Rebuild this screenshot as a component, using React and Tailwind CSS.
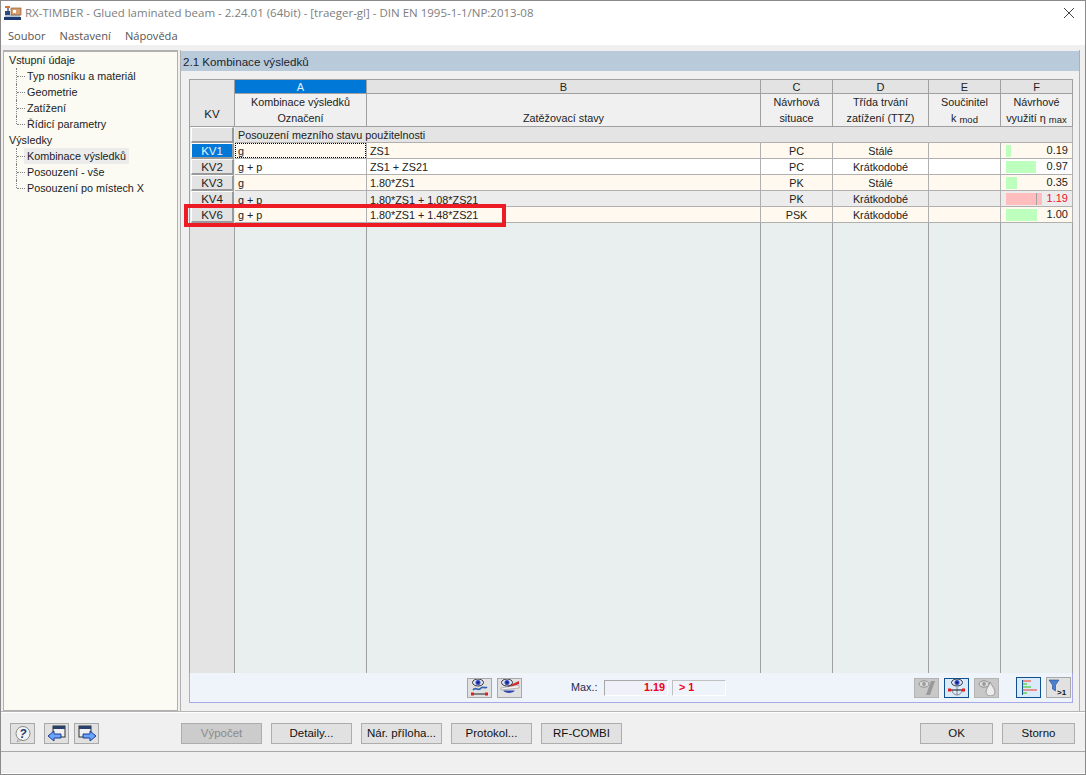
import React from "react";

const cols = "grid grid-cols-[45px_132px_394px_72px_96px_72px_72px]";

function TreeItem({ children, active, last }) {
  return (
    <div className="relative h-4 pl-[15px] flex items-center">
      <span className={`absolute left-[7px] top-0 w-0 border-l border-dotted border-[#808080] ${last ? "h-2" : "h-4"}`} />
      <span className="absolute left-[8px] top-2 w-[8px] border-t border-dotted border-[#808080]" />
      <span className={`px-[3px] h-4 leading-4 ${active ? "bg-[#ececec]" : ""}`}>{children}</span>
    </div>
  );
}

function ColLetter({ children, active }) {
  return (
    <div className={`h-[14px] leading-[14px] text-center text-[11px] border-r border-b border-[#a0a0a0] ${active ? "bg-[#0078d7] text-[#dff0ff]" : "bg-[#e3e3e3] text-[#222]"}`}>
      {children}
    </div>
  );
}

function Head({ a, b }) {
  return (
    <div className="h-[33px] bg-[#f0f0f0] border-r border-b border-[#a0a0a0] flex flex-col items-center text-[#222] leading-4">
      <div className="h-4 leading-4">{a}</div>
      <div className="h-4 leading-4">{b}</div>
    </div>
  );
}

function Bar({ w, red, value }) {
  return (
    <div className="relative h-4 border-r border-b border-[#b0b0b0] flex items-center justify-end pr-[4px]">
      <span className={`absolute left-[5px] top-[2px] h-[12px] ${red ? "bg-[#ffbdbd]" : "bg-[#bdffbd]"}`} style={{ width: w }} />
      {red && <span className="absolute left-[35px] top-[2px] h-[12px] w-px bg-[#a0a0a0]" />}
      <span className={`relative leading-[17px] text-[11px] ${red ? "text-[#f01030]" : "text-[#222]"}`}>{value}</span>
    </div>
  );
}

function Row({ kv, a, b, c, d, w, value, bg, red, selected, clip }) {
  const cell = `h-4 border-r border-b border-[#b0b0b0] leading-[17px] ${bg}`;
  return (
    <div className={cols}>
      <div className={`h-4 mx-px border-t border-l border-white border-b-2 border-r-2 border-b-[#9a9a9a] border-r-[#9a9a9a] leading-[15px] text-center text-[11.5px] ${selected ? "bg-[#0078d7] text-[#e6f3ff]" : "bg-[#e3e3e3] text-[#222]"}`}>{kv}</div>
      <div className={`${cell} pl-[3px] relative overflow-hidden`}>
        <span className={clip ? "relative top-[1px]" : ""}>{a}</span>
        {selected && <span className="absolute inset-0 border border-dotted border-black" />}
      </div>
      <div className={`${cell} pl-[3px] overflow-hidden`}><span className={clip ? "relative top-[1px]" : ""}>{b}</span></div>
      <div className={`${cell} text-center`}>{c}</div>
      <div className={`${cell} text-center`}>{d}</div>
      <div className={cell} />
      <div className={bg}><Bar w={w} red={red} value={value} /></div>
    </div>
  );
}

function IconBtn({ children, active, disabled, size = "w-[25px] h-[21px]" }) {
  return (
    <div className={`${size} flex items-center justify-center border ${active ? "border-[#10508c] bg-[#d9ebfb]" : disabled ? "border-[#b4b4b4] bg-[#c8c8c8]" : "border-[#a8a8a8] bg-[#e1e1e1]"}`}>
      {children}
    </div>
  );
}

function Eye({ x = 4, y = 2, c = "#2f48c8" }) {
  return (
    <g>
      <ellipse cx={x + 5} cy={y + 3.5} rx="5.5" ry="3.5" fill="#dfe4f4" stroke="#222" strokeWidth="0.9" />
      <circle cx={x + 5} cy={y + 3.5} r="2.5" fill={c} />
      <circle cx={x + 5} cy={y + 3.5} r="0.9" fill="#0a1040" />
    </g>
  );
}

function GrayEye() {
  return (
    <g>
      <ellipse cx="7" cy="5" rx="5" ry="3.2" fill="#dcdcdc" stroke="#8a8a8a" strokeWidth="0.9" />
      <circle cx="7" cy="5" r="1.9" fill="#9a9a9a" />
    </g>
  );
}

function Btn({ children, disabled, w }) {
  return (
    <div className={`h-[21px] flex items-center justify-center border border-[#adadad] text-[11.5px] ${w} ${disabled ? "bg-[#cccccc] text-[#8a8a8a]" : "bg-[#e1e1e1] text-[#111]"}`}>
      {children}
    </div>
  );
}

export default function App() {
  return (
    <div className="w-[1086px] h-[775px] bg-[#f0f0f0] flex flex-col overflow-hidden relative text-[#222] border border-[#8a8a8a]" style={{ fontFamily: '"Liberation Sans", Arial, sans-serif', fontSize: 10.8 }}>
      {/* title bar */}
      <div className="h-[24px] bg-white flex items-center pl-[3px] shrink-0">
        <svg width="18" height="16" viewBox="0 0 18 16" className="mr-[3px]">
          <rect x="0" y="12" width="17" height="3" fill="#1d3c6e" />
          <rect x="1" y="10" width="15" height="2" fill="#b8c4d8" />
          <rect x="1" y="1" width="5" height="2" fill="#d87838" />
          <rect x="3" y="3" width="2" height="3" fill="#7a8aa8" />
          <rect x="1" y="6" width="5" height="4" fill="#2a4a80" />
          <rect x="7" y="3" width="10" height="7" fill="#d8a070" stroke="#7a4a20" strokeWidth="0.6" />
          <rect x="9" y="5" width="3" height="3" fill="#fff" />
        </svg>
        <span className="text-[#7e7e7e]" style={{ fontFamily: '"Open Sans", sans-serif', fontSize: 11.5 }}>RX-TIMBER - Glued laminated beam - 2.24.01 (64bit) - [traeger-gl] - DIN EN 1995-1-1/NP:2013-08</span>
        <svg width="12" height="12" viewBox="0 0 12 12" className="ml-auto mr-[10px]"><path d="M1 1 L11 11 M11 1 L1 11" stroke="#444" strokeWidth="1" /></svg>
      </div>
      {/* menu */}
      <div className="h-[20px] bg-white flex items-center pl-[7px] pt-[3px] gap-[14px] text-[#555] shrink-0" style={{ fontFamily: '"Open Sans", sans-serif', fontSize: 11.1 }}>
        <span>Soubor</span><span>Nastavení</span><span>Nápověda</span>
      </div>
      {/* body */}
      <div className="h-[667px] flex pt-[5px] pl-[2px] pr-[5px] gap-[2px] shrink-0 border-b border-[#b5b5b5]">
        {/* tree */}
        <div className="w-[175px] shrink-0 bg-[#fbfbf3] border border-t-2 border-[#b0b0b0] pl-[5px] leading-4">
          <div className="h-4 leading-4">Vstupní údaje</div>
          <TreeItem>Typ nosníku a materiál</TreeItem>
          <TreeItem>Geometrie</TreeItem>
          <TreeItem>Zatížení</TreeItem>
          <TreeItem last>Řídicí parametry</TreeItem>
          <div className="h-4 leading-4">Výsledky</div>
          <TreeItem active>Kombinace výsledků</TreeItem>
          <TreeItem>Posouzení - vše</TreeItem>
          <TreeItem last>Posouzení po místech X</TreeItem>
        </div>
        {/* content */}
        <div className="flex-1 min-w-0 flex flex-col border-r border-[#b0b0b0] border-l">
          <div className="h-[20px] mt-px bg-[#b9cada] leading-[21px] pl-[2px] shrink-0 text-[11.6px] text-[#1c2530]">2.1 Kombinace výsledků</div>
          <div className="flex-1 flex flex-col ml-[8px] mr-[6px] mt-[8px] mb-[8px]">
            <div className="flex-1 flex flex-col border-l border-t border-[#a0a0a0] bg-[#e9efee]">
              {/* header */}
              <div className={cols}>
                <div className="row-span-2 bg-[#e6e6e6] border-r border-b border-[#a0a0a0] flex items-end justify-center pb-[3px] text-[11.5px]">KV</div>
                <ColLetter active>A</ColLetter>
                <ColLetter>B</ColLetter>
                <ColLetter>C</ColLetter>
                <ColLetter>D</ColLetter>
                <ColLetter>E</ColLetter>
                <ColLetter>F</ColLetter>
                <Head a="Kombinace výsledků" b="Označení" />
                <Head a="" b="Zatěžovací stavy" />
                <Head a="Návrhová" b="situace" />
                <Head a="Třída trvání" b="zatížení (TTZ)" />
                <Head a="Součinitel" b={<span>k <span className="text-[9.5px] relative top-px">mod</span></span>} />
                <Head a="Návrhové" b={<span>využití η <span className="text-[9.5px] relative top-px">max</span></span>} />
              </div>
              <div className={cols}>
                <div className="h-4 mx-px bg-[#e3e3e3] border-t border-l border-white border-b-2 border-r-2 border-b-[#9a9a9a] border-r-[#9a9a9a]" />
                <div className="col-span-6 h-4 bg-[#e4e4e4] pl-[3px] leading-[17px] border-b border-r border-[#b0b0b0]">Posouzení mezního stavu použitelnosti</div>
              </div>
              <Row kv="KV1" a="g" b="ZS1" c="PC" d="Stálé" w={5} value="0.19" bg="bg-[#fff9ef]" selected />
              <Row kv="KV2" a="g + p" b="ZS1 + ZS21" c="PC" d="Krátkodobé" w={30} value="0.97" bg="bg-white" />
              <Row kv="KV3" a="g" b="1.80*ZS1" c="PK" d="Stálé" w={11} value="0.35" bg="bg-[#fff9ef]" />
              <Row kv="KV4" a="g + p" b="1.80*ZS1 + 1.08*ZS21" c="PK" d="Krátkodobé" w={36} value="1.19" bg="bg-[#ececec]" red clip />
              <Row kv="KV6" a="g + p" b="1.80*ZS1 + 1.48*ZS21" c="PSK" d="Krátkodobé" w={31} value="1.00" bg="bg-[#fff9ef]" />
              <div className={`${cols} flex-1`}>
                <div className="bg-[#e4e4e4] border-r border-[#a0a0a0]" />
                <div className="border-r border-[#a0a0a0]" />
                <div className="border-r border-[#a0a0a0]" />
                <div className="border-r border-[#a0a0a0]" />
                <div className="border-r border-[#a0a0a0]" />
                <div className="border-r border-[#a0a0a0]" />
                <div className="border-r border-[#a0a0a0]" />
              </div>
            </div>
            {/* toolbar */}
            <div className="h-[30px] shrink-0 bg-[#eff3fa] border-b border-r border-l border-[#a8a8e8] flex items-center pr-[1px]">
              <div className="ml-[277px] flex gap-[5px]">
                <IconBtn size="w-[25px] h-[20px]">
                  <svg width="20" height="17" viewBox="0 0 20 17">
                    <path d="M3 11 C6 7 8 13 11 9 C13 7 15 10 17 8" stroke="#3060b0" strokeWidth="1.6" fill="none" />
                    <Eye x={3} y={0} />
                    <path d="M3 15 H16" stroke="#222" strokeWidth="1" />
                    <rect x="1" y="13.5" width="3" height="3" fill="#e02020" />
                    <rect x="15" y="13.5" width="3" height="3" fill="#e02020" />
                  </svg>
                </IconBtn>
                <IconBtn size="w-[25px] h-[20px]">
                  <svg width="20" height="17" viewBox="0 0 20 17">
                    <path d="M8 7 L19 2 V5 L8 9 Z" fill="#d03030" />
                    <path d="M1 9 L19 6 V9 L1 11 Z" fill="#f4f4f4" stroke="#666" strokeWidth="0.4" />
                    <path d="M3 11.5 A7 5 0 0 0 15 11.5 Z" fill="#2f48b0" />
                    <Eye x={2} y={0} />
                  </svg>
                </IconBtn>
              </div>
              <span className="ml-[49px] w-[33px] text-[#1a2a50]">Max.:</span>
              <div className="w-[64px] h-[16px] border border-[#a8a8a8] border-b-white border-r-white bg-[#eef1f7] flex items-center justify-end pr-[2px] font-bold text-[#f00020]">1.19</div>
              <div className="ml-[4px] w-[54px] h-[16px] border border-[#c0c0c0] border-b-white border-r-white flex items-center pl-[6px] font-bold text-[#f00020]">&gt; 1</div>
              <div className="ml-auto flex items-center">
                <IconBtn disabled size="w-[25px] h-[20px]">
                  <svg width="20" height="17" viewBox="0 0 20 17">
                    <path d="M14 2 L18 2 L13 16 L9 16 Z" fill="#999" />
                    <GrayEye />
                  </svg>
                </IconBtn>
                <div className="ml-[5px]"><IconBtn active size="w-[25px] h-[20px]">
                  <svg width="20" height="17" viewBox="0 0 20 17">
                    <path d="M5 11 A5 5 0 0 0 15 11" fill="none" stroke="#888" />
                    <path d="M10 8 V16" stroke="#888" />
                    <path d="M3 11 H17" stroke="#111" />
                    <rect x="1" y="9.5" width="3" height="3" fill="#e02020" />
                    <rect x="15" y="9.5" width="3" height="3" fill="#e02020" />
                    <Eye x={5} y={0} />
                  </svg>
                </IconBtn></div>
                <div className="ml-[5px]"><IconBtn disabled size="w-[25px] h-[20px]">
                  <svg width="20" height="17" viewBox="0 0 20 17">
                    <path d="M13 3 C15 7 18 10 18 13 A4 3.5 0 0 1 9 13 C9 10 12 7 13 3 Z" fill="#ececec" stroke="#999" />
                    <GrayEye />
                  </svg>
                </IconBtn></div>
                <div className="ml-[17px]"><IconBtn active>
                  <svg width="20" height="17" viewBox="0 0 20 17">
                    <path d="M3.5 1 V16" stroke="#10508c" />
                    <rect x="4" y="1" width="8" height="2" fill="#e89090" />
                    <rect x="4" y="4" width="4" height="2" fill="#80d880" />
                    <rect x="4" y="7" width="8" height="2" fill="#80d880" />
                    <rect x="4" y="10" width="14" height="2" fill="#e89090" />
                    <rect x="4" y="13" width="4" height="2" fill="#80d880" />
                  </svg>
                </IconBtn></div>
                <div className="ml-[5px]"><IconBtn>
                  <svg width="21" height="18" viewBox="0 0 21 18">
                    <path d="M1 1 H11 L7.5 6 V12 L4.5 10 V6 Z" fill="#4a80d0" stroke="#244a88" strokeWidth="0.6" />
                    <text x="9" y="16" fontSize="8" fontWeight="bold" fill="#111">&gt;1</text>
                  </svg>
                </IconBtn></div>
              </div>
            </div>
          </div>
        </div>
      </div>
      {/* buttons */}
      <div className="h-[40px] shrink-0 flex items-center pl-[9px] pr-[10px] pt-[3px] border-b border-[#a8a8a8] border-t border-t-white">
        <IconBtn>
          <svg width="18" height="18" viewBox="0 0 18 18">
            <circle cx="9" cy="8.5" r="7" fill="#f4f4f4" stroke="#8a8a8a" />
            <path d="M4 14 L3 17 L8 15 Z" fill="#d8d8d8" stroke="#8a8a8a" strokeWidth="0.5" />
            <text x="9" y="13" textAnchor="middle" fontSize="12" fontWeight="bold" fontStyle="italic" fill="#243c78">?</text>
          </svg>
        </IconBtn>
        <div className="ml-[9px]"><IconBtn>
          <svg width="20" height="18" viewBox="0 0 20 18">
            <rect x="6" y="1" width="12" height="11" fill="#f0f0f0" stroke="#333" />
            <rect x="6" y="1" width="12" height="3" fill="#28406c" />
            <path d="M1 11 L7 6 V9 H14 V13 H7 V16 Z" fill="#6aa4ff" stroke="#1c3c90" />
          </svg>
        </IconBtn></div>
        <div className="ml-[5px]"><IconBtn>
          <svg width="20" height="18" viewBox="0 0 20 18">
            <rect x="2" y="1" width="12" height="11" fill="#f0f0f0" stroke="#333" />
            <rect x="2" y="1" width="12" height="3" fill="#28406c" />
            <path d="M19 11 L13 6 V9 H6 V13 H13 V16 Z" fill="#6aa4ff" stroke="#1c3c90" />
          </svg>
        </IconBtn></div>
        <div className="ml-[82px] flex gap-[9px]">
          <Btn disabled w="w-[81px]">Výpočet</Btn>
          <Btn w="w-[81px]">Detaily...</Btn>
          <Btn w="w-[81px]">Nár. příloha...</Btn>
          <Btn w="w-[81px]">Protokol...</Btn>
          <Btn w="w-[81px]">RF-COMBI</Btn>
        </div>
        <div className="ml-auto flex gap-[9px]">
          <Btn w="w-[73px]">OK</Btn>
          <Btn w="w-[73px]">Storno</Btn>
        </div>
      </div>
      <div className="flex-1 border-b border-white" />
      {/* red annotation */}
      <div className="absolute left-[183px] top-[203px] w-[322px] h-[23px] border-[4px] border-[#ed1c24]" />
    </div>
  );
}
